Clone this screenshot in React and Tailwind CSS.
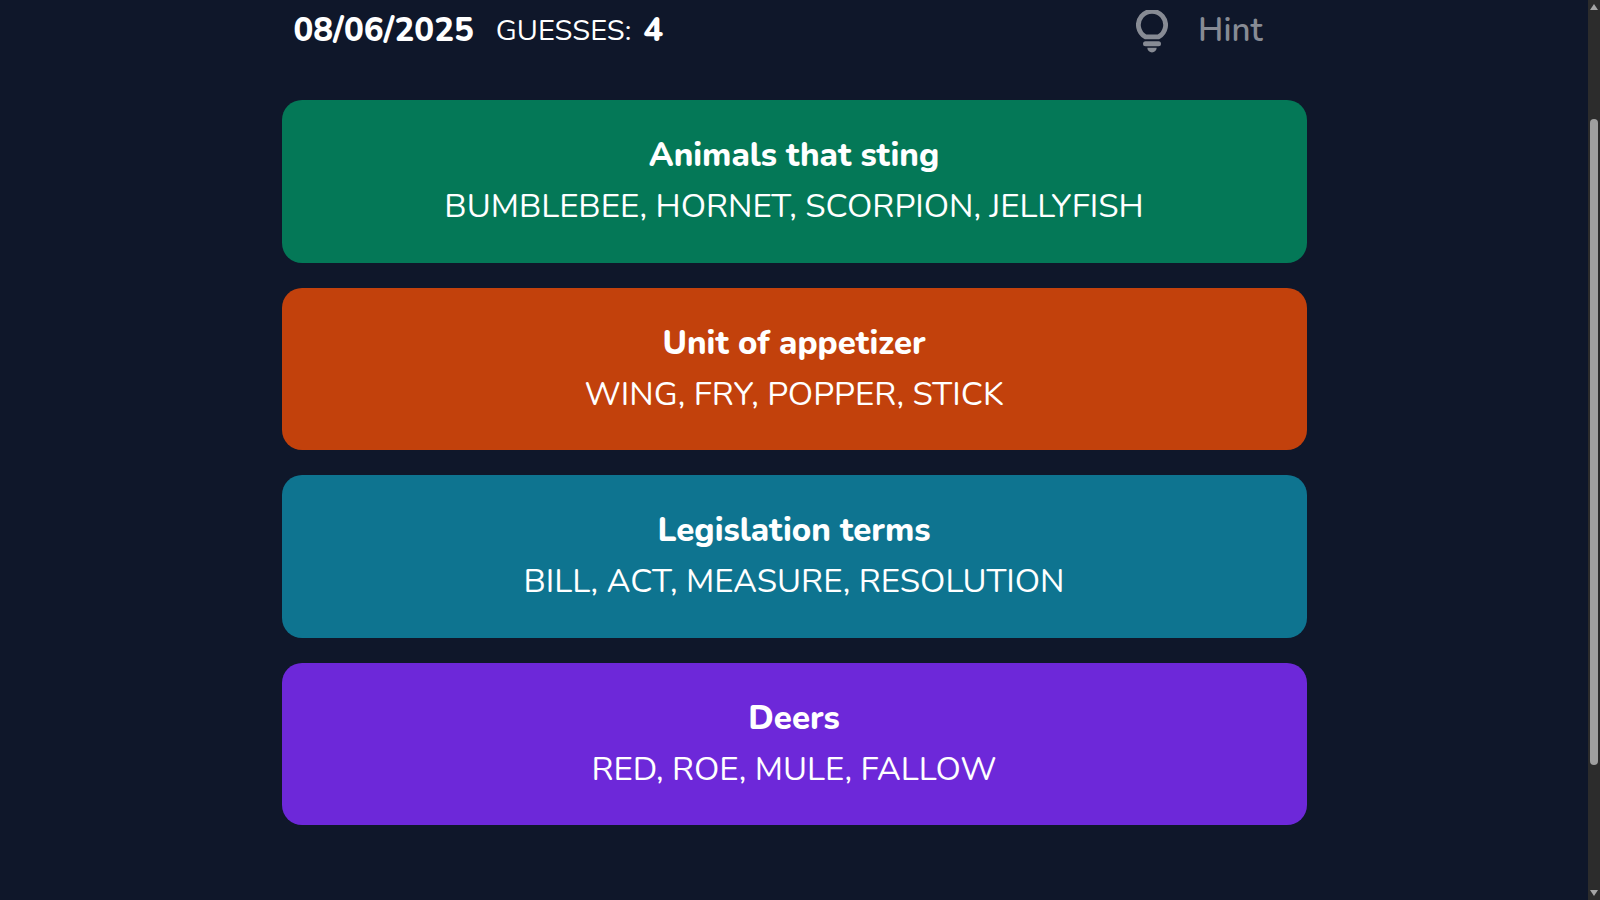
const groups = [
  { title: "Animals that sting", words: "BUMBLEBEE, HORNET, SCORPION, JELLYFISH", color: "bg-[#047857]" },
  { title: "Unit of appetizer", words: "WING, FRY, POPPER, STICK", color: "bg-[#c2410c]" },
  { title: "Legislation terms", words: "BILL, ACT, MEASURE, RESOLUTION", color: "bg-[#0e7490]" },
  { title: "Deers", words: "RED, ROE, MULE, FALLOW", color: "bg-[#6d28d9]" },
];

function BulbIcon() {
  return (
    <svg viewBox="0 0 32 43" className="h-[43px] w-8" fill="none" aria-hidden="true">
      <path
        d="M9.5 26.9A13.6 13.6 0 1 1 22.5 26.9Z"
        stroke="currentColor"
        strokeWidth="4.8"
        strokeLinejoin="round"
      />
      <rect x="7" y="31.2" width="18" height="5" rx="2.5" fill="currentColor" />
      <path d="M11.3 37.8h9.4a4.7 4.7 0 0 1-9.4 0Z" fill="currentColor" />
    </svg>
  );
}

function ScrollTrack() {
  return (
    <div className="flex w-3 shrink-0 flex-col items-center bg-[#2c2c2c] py-1" aria-hidden="true">
      <svg viewBox="0 0 8 6" className="h-[6px] w-2 shrink-0">
        <path d="M4 0 8 6H0Z" fill="#a5a5a5" />
      </svg>
      <div className="h-[109px] shrink-0" />
      <div className="w-2 grow rounded-full bg-[#9f9f9f]" />
      <div className="h-[125px] shrink-0" />
      <svg viewBox="0 0 8 6" className="h-[6px] w-2 shrink-0">
        <path d="M0 0H8L4 6Z" fill="#a5a5a5" />
      </svg>
    </div>
  );
}

export default function App() {
  return (
    <div className="flex min-h-screen bg-[#0f172a] font-[Nunito,Lato,sans-serif] text-white">
      <main className="min-w-0 grow">
        <div className="mx-auto w-full max-w-[1025px]">
          <header className="flex h-[62px] items-center justify-between pr-11 pl-3">
            <div className="flex items-center">
              <time dateTime="2025-08-06" className="text-[33px] leading-[50px] font-extrabold">08/06/2025</time>
              <p className="ml-[22px] flex items-center gap-3 text-[29px] leading-[50px]">
                <span>GUESSES:</span>
                <strong className="text-[33px] font-extrabold">4</strong>
              </p>
            </div>
            <button type="button" disabled className="flex items-center gap-[30px] text-[33px] leading-[50px] font-semibold text-[#878b94]">
              <BulbIcon />
              Hint
            </button>
          </header>
          <div className="mt-[38px] grid min-h-[725px] grid-rows-4 gap-[25px]">
            {groups.map((g) => (
              <section key={g.title} className={`flex flex-col items-center justify-center rounded-[20px] text-center text-[33px] leading-[51px] ${g.color}`}>
                <h2 className="font-extrabold">{g.title}</h2>
                <p>{g.words}</p>
              </section>
            ))}
          </div>
        </div>
      </main>
      <ScrollTrack />
    </div>
  );
}
